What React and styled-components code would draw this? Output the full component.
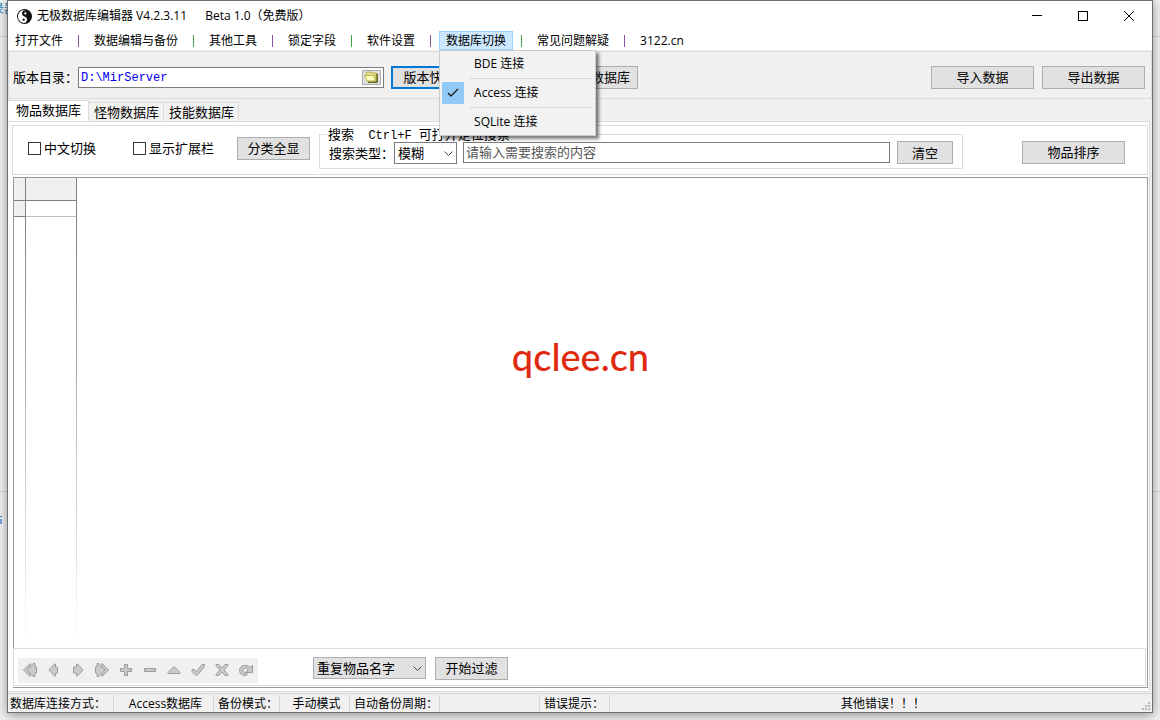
import styled, { createGlobalStyle, css } from "styled-components";

const menuItems = [
  "打开文件",
  "数据编辑与备份",
  "其他工具",
  "锁定字段",
  "软件设置",
  "数据库切换",
  "常见问题解疑",
  "3122.cn",
];

const connections = ["BDE 连接", "Access 连接", "SQLite 连接"];

const navigatorIcons = [
  { label: "第一条", d: "M8 1.5L1.500 8 8 14.500V11l3 3.500h2V11h1.500V5H13V1.500h-2L8 5z M8 5L5 8l3 3" },
  { label: "上一条", d: "M9.500 2v3h2v6h-2v3h-1L3 8l5.500-6z" },
  { label: "下一条", d: "M6.500 2v3h-3v6h3v3h1L13 8 7.500 2z" },
  { label: "最后一条", d: "M8 1.500L14.500 8 8 14.500V11l-3 3.500H3V11H1.500V5H3V1.500h2L8 5z M8 5l3 3-3 3" },
  { label: "添加", d: "M6.500 2.500h3v4h4v3h-4v4h-3v-4h-4v-3h4z" },
  { label: "删除", d: "M2.500 6.500h11v3h-11z" },
  { label: "编辑", d: "M8 4.500l6 6v1H2v-1z" },
  { label: "提交", d: "M14.500 2.500v2l-7.500 9H6L2 9.500v-2h2l2.500 2 5.500-7z" },
  { label: "取消", d: "M2 2.500h3l3 3.500 3-3.500h3v1L10 8l4 4.500v1h-3L8 10l-3 3.500H2v-1L6 8 2 3.500z" },
  {
    label: "刷新",
    d: "M14.500 3.500v7h-7l2.500-2.500c-1-3-5-2-5 .5 0 2.500 2.500 3 4 2v2.500c-4 1.500-7.500-1-7.500-4.500 0-5 6.500-7 10.500-3z",
  },
];

function App() {
  return (
    <Desktop>
      <GlobalStyle />
      <BackText>录器</BackText>
      <BackLine $top="36px" />
      <BackLine $top="491px" />
      <BackMark />
      <Window>
        <TitleBar>
          <YinYang />
          <Title>
            无极数据库编辑器 V4.2.3.11 <span>Beta 1.0（免费版）</span>
          </Title>
          <WindowControls />
        </TitleBar>

        <MenuBar>
          {menuItems.map((item, i) => (
            <MenuSlot key={item}>
              {i > 0 && <MenuDivider $green={i % 2 === 0} />}
              <MenuHolder>
                <MenuButton $open={item === "数据库切换"}>{item}</MenuButton>
                {item === "数据库切换" && <ConnectionMenu />}
              </MenuHolder>
            </MenuSlot>
          ))}
        </MenuBar>

        <Toolbar>
          <label htmlFor="dir">版本目录：</label>
          <PathBox>
            <PathInput id="dir" defaultValue="D:\MirServer" />
            <FolderButton aria-label="选择目录">
              <FolderIcon />
            </FolderButton>
          </PathBox>
          <Button $width="103px" $focused>
            版本快速选择
          </Button>
          <BackupButton $width="81px">备份数据库</BackupButton>
          <Spacer />
          <Button $width="103px">导入数据</Button>
          <Button $width="103px">导出数据</Button>
        </Toolbar>

        <Tabs>
          <Tab $active>物品数据库</Tab>
          <Tab>怪物数据库</Tab>
          <Tab>技能数据库</Tab>
        </Tabs>

        <TabPage>
          <SearchPanel />
          <Frame>
            <DataGrid />
            <FilterBar />
          </Frame>
        </TabPage>

        <StatusBar>
          <StatusCell $width="106px" $first>
            数据库连接方式：
          </StatusCell>
          <StatusCell $width="100px" $center>
            Access数据库
          </StatusCell>
          <StatusCell $width="66px">备份模式：</StatusCell>
          <StatusCell $width="70px" $center>
            手动模式
          </StatusCell>
          <StatusCell $width="90px">自动备份周期：</StatusCell>
          <StatusCell $width="100px" />
          <StatusCell $width="70px">错误提示：</StatusCell>
          <StatusCell $center $last>
            其他错误！！！
          </StatusCell>
          <SizeGrip />
        </StatusBar>
      </Window>
    </Desktop>
  );
}

function YinYang() {
  return (
    <svg width="15" height="15" viewBox="0 0 16 16">
      <circle cx="8" cy="8" r="8" fill="#111" />
      <g transform="rotate(15 8 8)">
        <path
          d="M8 1A7 7 0 0 0 8 15A3.500 3.500 0 0 0 8 8A3.500 3.500 0 0 1 8 1z"
          fill="#fff"
        />
        <circle cx="8" cy="4.500" r="1.200" fill="#fff" />
        <circle cx="8" cy="11.500" r="1.200" fill="#111" />
      </g>
    </svg>
  );
}

function WindowControls() {
  return (
    <Controls>
      <ControlButton aria-label="最小化">
        <svg width="10" height="11" shapeRendering="crispEdges">
          <path d="M0 4.500h10" stroke="#000" />
        </svg>
      </ControlButton>
      <ControlButton aria-label="最大化">
        <svg width="10" height="11" shapeRendering="crispEdges">
          <path d="M.5 .5h9v9h-9z" stroke="#000" fill="none" />
        </svg>
      </ControlButton>
      <ControlButton aria-label="关闭">
        <svg width="10" height="11">
          <path d="M0 0l10 10M10 0l-10 10" stroke="#000" />
        </svg>
      </ControlButton>
    </Controls>
  );
}

function ConnectionMenu() {
  return (
    <Popup>
      {connections.map((name, i) => (
        <li key={name}>
          {i > 0 && <PopupLine />}
          <PopupItem>
            <CheckCell $checked={i === 1}>
              {i === 1 && (
                <svg width="12" height="10">
                  <path d="M1 5l3 3 7-7" stroke="#222" strokeWidth="1.400" fill="none" />
                </svg>
              )}
            </CheckCell>
            {name}
          </PopupItem>
        </li>
      ))}
    </Popup>
  );
}

function FolderIcon() {
  return (
    <svg width="15" height="12" viewBox="0 0 15 12">
      <path d="M4 2h8l2 1v8l-1 1H4z" fill="#6b6b2a" />
      <path d="M2 2l1-1h4l1 1h4v8H3z" fill="#e6e08a" stroke="#b8b04a" />
      <path d="M.7 4.500h9l2 5.500H3z" fill="#ffffc0" stroke="#b8b04a" />
    </svg>
  );
}

function SearchPanel() {
  return (
    <Panel>
      <CheckLabel $width="105px">
        <CheckBox type="checkbox" />
        中文切换
      </CheckLabel>
      <CheckLabel $width="104px">
        <CheckBox type="checkbox" />
        显示扩展栏
      </CheckLabel>
      <Button $width="73px">分类全显</Button>
      <SearchGroup>
        <legend>
          搜索<Latin>{"  Ctrl+F "}</Latin>可打开定位搜索
        </legend>
        <SearchRow>
          <label htmlFor="kind">搜索类型：</label>
          <SelectBox $width="63px">
            <select id="kind">
              <option>模糊</option>
            </select>
            <Chevron />
          </SelectBox>
          <SearchInput aria-label="搜索内容" placeholder="请输入需要搜索的内容" />
          <ClearButton $width="56px">清空</ClearButton>
        </SearchRow>
      </SearchGroup>
      <SortButton $width="103px">物品排序</SortButton>
    </Panel>
  );
}

function Chevron() {
  return (
    <svg width="9" height="6">
      <path d="M.5 .5l4 4 4-4" stroke="#444" fill="none" />
    </svg>
  );
}

function DataGrid() {
  return (
    <Grid>
      <GridTable>
        <thead>
          <tr>
            <th />
            <th />
          </tr>
        </thead>
        <tbody>
          <tr>
            <td />
            <td />
          </tr>
        </tbody>
      </GridTable>
      <GridTail>
        <TailColumn $width="12px" />
        <TailColumn $width="51px" />
        <Watermark>qclee.cn</Watermark>
      </GridTail>
    </Grid>
  );
}

function FilterBar() {
  return (
    <Filter>
      <Navigator>
        {navigatorIcons.map(({ label, d }) => (
          <button key={label} aria-label={label} disabled>
            <svg width="16" height="16" viewBox="0 0 16 16">
              <path d={d} fill="#cacaca" stroke="#9c9c9c" />
            </svg>
          </button>
        ))}
      </Navigator>
      <SelectBox $width="113px" $gray>
        <select aria-label="过滤条件">
          <option>重复物品名字</option>
        </select>
        <Chevron />
      </SelectBox>
      <Button $width="73px">开始过滤</Button>
    </Filter>
  );
}

function SizeGrip() {
  return (
    <Grip width="8" height="8" fill="#b8b8b8">
      <path d="M6 0h2v2H6zM3 3h2v2H3zM6 3h2v2H6zM0 6h2v2H0zM3 6h2v2H3zM6 6h2v2H6z" />
    </Grip>
  );
}

const uiFont = `"Open Sans", "Noto Sans CJK SC", sans-serif`;
const bodyFont = `"Noto Sans CJK SC", sans-serif`;

const GlobalStyle = createGlobalStyle`
  * {
    box-sizing: border-box;
  }

  body {
    margin: 0;
    color: #000;
    font: 13px/16px ${bodyFont};
  }

  button, input, select {
    font: inherit;
    color: inherit;
    margin: 0;
    padding: 0;
    border-radius: 0;
  }
`;

const Desktop = styled.div`
  position: relative;
  display: flex;
  min-height: 100vh;
  padding: 0 7px 7px;
  overflow: hidden;
  background: #f0f0f0;
`;

const BackText = styled.span`
  position: absolute;
  top: 0;
  left: -8px;
  font-size: 12px;
  color: #2f86c5;
`;

const BackLine = styled.div`
  position: absolute;
  top: ${({ $top }) => $top};
  left: 0;
  right: 0;
  height: 1px;
  background: #d4d4d4;
`;

const BackMark = styled.div`
  position: absolute;
  top: 516px;
  left: 0;
  width: 2px;
  height: 8px;
  border-top: 1px solid #2f86c5;
  border-bottom: 5px solid #7aa6dc;
`;

const Window = styled.main`
  position: relative;
  display: flex;
  flex-direction: column;
  flex: 1;
  min-width: 0;
  border: 1px solid #6e6e6e;
  background: #f0f0f0;
  box-shadow: 0 2px 10px rgba(0, 0, 0, 0.4);
`;

const TitleBar = styled.header`
  display: flex;
  align-items: center;
  height: 30px;
  padding-left: 9px;
  background: #fff;
  font: 12px/16px ${uiFont};
`;

const Title = styled.h1`
  flex: 1;
  margin: 0 0 0 5px;
  font: inherit;

  span {
    margin-left: 15px;
  }
`;

const Controls = styled.div`
  display: flex;
`;

const ControlButton = styled.button`
  display: flex;
  align-items: center;
  justify-content: center;
  width: 46px;
  height: 30px;
  border: none;
  background: none;
`;

const MenuBar = styled.nav`
  display: flex;
  height: 19px;
  background: #fff;
  font: 12px/16px ${uiFont};
`;

const MenuSlot = styled.div`
  display: flex;
`;

const MenuHolder = styled.div`
  position: relative;
`;

const MenuDivider = styled.span`
  width: 1px;
  height: 12px;
  margin: 4px 8px;
  background: ${({ $green }) => ($green ? "#3fa34a" : "#8d4f9c")};
`;

const MenuButton = styled.button`
  height: 19px;
  padding: 0 6px;
  border: 1px solid transparent;
  background: none;
  white-space: nowrap;

  ${({ $open }) =>
    $open &&
    css`
      border-color: #99d1ff;
      background: #cce8ff;
    `}
`;

const Popup = styled.ul`
  position: absolute;
  z-index: 2;
  top: 19px;
  left: 0;
  width: 157px;
  margin: 0;
  padding: 2px;
  list-style: none;
  border: 1px solid #ccc;
  background: #f2f2f2;
  box-shadow: 3px 3px 3px rgba(0, 0, 0, 0.5);
`;

const PopupLine = styled.div`
  height: 1px;
  margin: 3px 1px 3px 28px;
  background: #d7d7d7;
`;

const PopupItem = styled.button`
  display: flex;
  align-items: center;
  gap: 10px;
  width: 100%;
  height: 22px;
  border: none;
  background: none;
`;

const CheckCell = styled.span`
  display: flex;
  align-items: center;
  justify-content: center;
  width: 22px;
  height: 22px;
  background: ${({ $checked }) => ($checked ? "#91c9f7" : "none")};
`;

const Toolbar = styled.div`
  display: flex;
  align-items: center;
  gap: 8px;
  height: 48px;
  margin-top: 1px;
  padding: 4px 6px 0 4px;
  border: 1px solid #dcdcdc;
  white-space: nowrap;

  label {
    margin-right: -8px;
  }
`;

const PathBox = styled.div`
  display: flex;
  align-items: center;
  width: 306px;
  height: 21px;
  margin-right: -1px;
  padding: 0 2px;
  border: 1px solid #7a7a7a;
  background: #fff;
`;

const PathInput = styled.input`
  flex: 1;
  min-width: 0;
  padding-top: 2px;
  border: none;
  outline: none;
  background: none;
  color: #0000f0;
  font: 12px/16px "Liberation Mono", monospace;
`;

const FolderButton = styled.button`
  display: flex;
  align-items: center;
  justify-content: center;
  width: 19px;
  height: 15px;
  border: 1px solid #adadad;
  background: #e1e1e1;
`;

const Button = styled.button`
  flex: none;
  width: ${({ $width }) => $width};
  height: 23px;
  border: ${({ $focused }) =>
    $focused ? "2px solid #0078d7" : "1px solid #adadad"};
  background: #e1e1e1;
  line-height: 16px;
  white-space: nowrap;
`;

const BackupButton = styled(Button)`
  margin-left: 55px;
`;

const ClearButton = styled(Button)`
  margin-left: 1px;
`;

const Spacer = styled.div`
  flex: 1;
`;

const Tabs = styled.div`
  display: flex;
  align-items: flex-end;
  height: 22px;
  padding-top: 1px;
`;

const Tab = styled.button`
  width: 75px;
  height: 19px;
  padding: 0 0 1px 1px;
  border: 1px solid #dcdcdc;
  border-width: 1px 1px 0 0;
  background: #f2f2f2;

  ${({ $active }) =>
    $active &&
    css`
      width: 81px;
      height: 21px;
      padding: 0 0 3px 1px;
      background: #fff;
    `}
`;

const TabPage = styled.section`
  display: flex;
  flex-direction: column;
  flex: 1;
  margin-right: 2px;
  padding: 3px 1px 3px 4px;
  border: 1px solid #dcdcdc;
  border-left: none;
  background: #fff;
`;

const Panel = styled.div`
  display: flex;
  align-items: center;
  height: 50px;
  padding: 1px 22px 5px 15px;
  border: 1px solid #dcdcdc;
  white-space: nowrap;
`;

const CheckLabel = styled.label`
  display: flex;
  align-items: center;
  gap: 3px;
  width: ${({ $width }) => $width};
`;

const CheckBox = styled.input`
  appearance: none;
  width: 13px;
  height: 13px;
  border: 1px solid #333;
  background: #fff;
`;

const SearchGroup = styled.fieldset`
  flex: 1;
  min-width: 0;
  margin: 0 59px 0 9px;
  padding: 0 9px 4px;
  border: 1px solid #dcdcdc;

  legend {
    height: 14px;
    margin-left: -2px;
    padding: 0 1px;
    line-height: 14px;
  }
`;

const Latin = styled.span`
  font: 12px/14px "Liberation Mono", monospace;
  white-space: pre;
`;

const SearchRow = styled.div`
  display: flex;
  align-items: center;
  gap: 6px;

  label {
    margin-right: -6px;
  }
`;

const SearchInput = styled.input`
  flex: 1;
  min-width: 0;
  height: 21px;
  padding: 0 2px 3px;
  border: 1px solid #7a7a7a;
  outline: none;

  &::placeholder {
    color: #555;
  }
`;

const SelectBox = styled.div`
  position: relative;
  width: ${({ $width }) => $width};
  height: 22px;

  select {
    appearance: none;
    width: 100%;
    height: 100%;
    padding: 0 3px;
    border: 1px solid ${({ $gray }) => ($gray ? "#adadad" : "#7a7a7a")};
    background: ${({ $gray }) => ($gray ? "#e1e1e1" : "#fff")};
  }

  svg {
    position: absolute;
    top: 9px;
    right: 4px;
    pointer-events: none;
  }
`;

const SortButton = styled(Button)`
  margin-top: 8px;
`;

const Frame = styled.div`
  display: flex;
  flex-direction: column;
  flex: 1;
  margin: 2px 0 0 1px;
  border: 1px solid #999;
  border-left: none;
`;

const Grid = styled.div`
  display: flex;
  flex-direction: column;
  flex: 1;
  border-left: 1px solid #999;
`;

const GridTable = styled.table`
  width: 63px;
  table-layout: fixed;
  border-spacing: 0;

  th,
  td {
    height: 16px;
    padding: 0;
    border: 1px solid #808080;
    border-width: 0 1px 1px 0;
  }

  th {
    height: 23px;
    background: #f0f0f0;
  }

  th:first-child {
    width: 12px;
  }

  td:first-child {
    background: #f0f0f0;
  }

  td:last-child {
    border-bottom-color: #c0c0c0;
  }
`;

const GridTail = styled.div`
  display: flex;
  flex: 1;
`;

const TailColumn = styled.div`
  width: ${({ $width }) => $width};
  background: linear-gradient(#808080, #fff) right / 1px 100% no-repeat;
`;

const Watermark = styled.div`
  flex: 1;
  margin: 112px 63px 0 0;
  color: #e02a10;
  font: 500 38px/54px Lato, sans-serif;
  text-align: center;
`;

const Filter = styled.div`
  display: flex;
  align-items: center;
  gap: 9px;
  height: 38px;
  margin: 0 1px 1px 0;
  padding: 2px 4px 0;
  border: 1px solid #dcdcdc;
`;

const Navigator = styled.div`
  display: flex;
  margin: 4px 46px 0 0;
  background: #f0f0f0;

  button {
    display: flex;
    align-items: center;
    justify-content: center;
    width: 24px;
    height: 25px;
    border: none;
    background: none;
  }
`;

const StatusBar = styled.footer`
  position: relative;
  display: flex;
  height: 19px;
  margin-top: 1px;
  border-top: 1px solid #d7d7d7;
  font: 12px/18px ${uiFont};
`;

const StatusCell = styled.div`
  flex: ${({ $last }) => ($last ? 1 : "none")};
  width: ${({ $width }) => $width};
  height: 17px;
  margin-top: 1px;
  padding-left: ${({ $first }) => ($first ? "2px" : "4px")};
  border-right: ${({ $last }) => ($last ? "none" : "1px solid #d7d7d7")};
  text-align: ${({ $center }) => ($center ? "center" : "left")};
  white-space: nowrap;
`;

const Grip = styled.svg`
  position: absolute;
  right: 2px;
  bottom: 2px;
`;

export default App;
